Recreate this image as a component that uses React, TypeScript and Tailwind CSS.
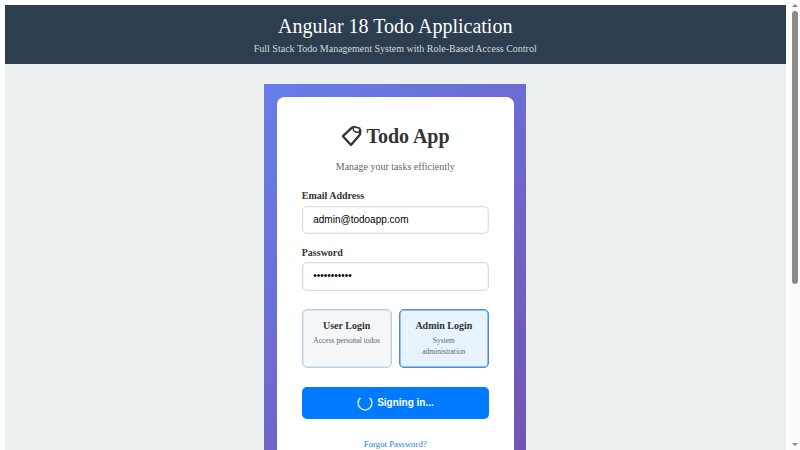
import React from "react";

function Field({ label, value, type, border }: { label: string; value: string; type: string; border: string }) {
  return (
    <label className="mb-[10.2px] block">
      <span className="block h-[15px] text-[10px] leading-[15px] font-bold text-[#333333]">{label}</span>
      <input
        type={type}
        defaultValue={value}
        className={`mt-[2.5px] block h-[28.5px] w-full rounded-[5px] border bg-white px-[10.5px] pb-[1px] font-['Liberation_Sans',Arial,sans-serif] text-[10px] text-black shadow-[inset_0_0_0_0.3px_#d7e0ea] outline-none ${border}`}
      />
    </label>
  );
}

function RoleCard({ title, note, active }: { title: string; note: string; active?: boolean }) {
  return (
    <button
      className={`flex h-[59px] flex-1 flex-col items-center rounded-[5px] border px-[10.5px] pt-[9px] ${
        active
          ? "border-[#418fde] bg-[#e7f3ff] shadow-[inset_0_0_0_0.5px_#418fde]"
          : "border-[#bdd2ea] bg-[#f5f8fb] shadow-[inset_0_0_0_0.5px_#bdd2ea]"
      }`}
    >
      <span className="text-[10px] leading-[14px] font-bold whitespace-nowrap text-[#333333]">{title}</span>
      <span className="mt-[2px] text-center text-[7.5px] leading-[11.2px] text-[#666666]">{note}</span>
    </button>
  );
}

function Spinner() {
  return (
    <svg width="16" height="16" viewBox="0 0 16 16" fill="none" className="mr-[4.5px]">
      <path d="M3.4 2.9A6.9 6.9 0 1 0 12.6 2.9" stroke="#d5e9ff" strokeWidth="1.5" />
    </svg>
  );
}

function Clipboard() {
  return (
    <svg width="21" height="22" viewBox="0 0 21 22" fill="none" stroke="#333333" className="mr-[4.5px]">
      <path d="M11.2 2.4 1.9 11.2 10 20 19 9.4 19.3 5" strokeWidth="2.3" strokeLinejoin="round" />
      <path d="m10.8 2.3 2.2-.6 5.6 1.5.9 2.6" strokeWidth="1.8" />
      <path d="M12.4 2.2c-.9 3.4 1.8 6 5.4 4.8l1.2-2.4" strokeWidth="1.4" />
    </svg>
  );
}

export default function App() {
  return (
    <div className="flex h-screen overflow-hidden bg-white font-['Liberation_Serif','Times_New_Roman',serif]">
      <div className="flex min-w-0 flex-1 flex-col pt-[5px] pr-[4.5px] pl-[5px]">
        <header className="h-[59.4px] shrink-0 bg-[#2c3e50] pt-[10px] text-center text-white">
          <h1 className="text-[20px] leading-[23px]">Angular 18 Todo Application</h1>
          <p className="mt-[5px] text-[10px] leading-[12px] text-[#d5d8dc]">
            Full Stack Todo Management System with Role-Based Access Control
          </p>
        </header>
        <main className="flex flex-1 items-start justify-center bg-[#ecf0f1] pt-[20px]">
          <div className="h-[520px] w-[262px] shrink-0 bg-[linear-gradient(135deg,#667eea_0%,#764ba2_100%)] p-[12.5px]">
            <section className="h-[495px] rounded-[7.5px] bg-white px-[25px] pt-[26px]">
              <h2 className="flex items-center justify-center text-[20px] leading-[27px] font-bold text-[#333333]">
                <Clipboard />
                Todo App
              </h2>
              <p className="mt-[10px] text-center text-[10px] leading-[14px] text-[#666666]">Manage your tasks efficiently</p>
              <form className="mt-[14.5px]" onSubmit={(e) => e.preventDefault()}>
                <Field label="Email Address" type="text" value="admin@todoapp.com" border="border-[#dce0e5]" />
                <Field label="Password" type="password" value="admin123456" border="border-[#cfdeea]" />
                <div className="mt-[18.5px] flex gap-[7.5px]">
                  <RoleCard title="User Login" note="Access personal todos" />
                  <RoleCard title="Admin Login" note="System administration" active />
                </div>
                <button className="mt-[19px] flex h-[32.2px] w-full items-center justify-center rounded-[5px] bg-[#007bff] pb-[0.5px] font-['Liberation_Sans',Arial,sans-serif] text-[10px] font-bold text-white">
                  <Spinner />
                  Signing in...
                </button>
              </form>
              <div className="mt-[18.7px] text-center text-[8.75px] leading-[13px] text-[#1680df]">Forgot Password?</div>
            </section>
          </div>
        </main>
      </div>
      <div className="flex w-[10px] shrink-0 flex-col items-center justify-between bg-[#fcfcfc] pt-[4px] pb-[4px]">
        <div className="flex flex-col items-center gap-[4px]">
          <svg width="6" height="3" viewBox="0 0 6 3"><path d="M0 3 3 0l3 3z" fill="#858585" /></svg>
          <div className="h-[273px] w-[6px] rounded-full bg-[#8b8b8b]" />
        </div>
        <svg width="6" height="3" viewBox="0 0 6 3"><path d="M0 0h6L3 3z" fill="#858585" /></svg>
      </div>
    </div>
  );
}
